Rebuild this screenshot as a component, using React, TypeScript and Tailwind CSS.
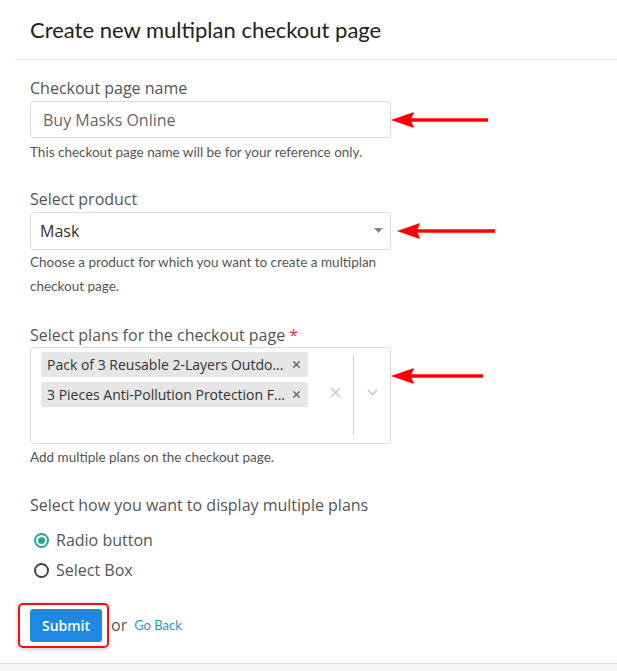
import { ChevronDown, X } from 'lucide-react';

function Arrow({ width }: { width: number }) {
  return (
    <svg width={width} height="20" viewBox={`0 0 ${width} 20`} className="shrink-0">
      <polygon points={`0,10 23,2 20,10 23,18`} fill="#ff0000" />
      <line x1="18" y1="10" x2={width} y2="10" stroke="#ff0000" strokeWidth="3.5" />
    </svg>
  );
}

export default function App() {
  const font = { fontFamily: '"Open Sans", "Liberation Sans", sans-serif' };
  const lato = { fontFamily: 'Lato, sans-serif' };
  return (
    <div className="w-[617px] h-[671px] bg-white flex flex-col" style={font}>
      <div className="h-[60px] ml-[15px] border-b border-[#e3e3e3] flex items-center pl-[15px]">
        <h1 className="text-[22px] text-[#222]" style={lato}>
          Create new multiplan checkout page
        </h1>
      </div>

      <div className="flex-1 pl-[30px] pt-[17px]">
        {/* page name */}
        <p className="text-[16px] text-[#555] leading-[22px]">Checkout page name</p>
        <div className="flex items-center mt-[2px]">
          <div className="w-[361px] h-[37px] border border-[#dcdcdc] rounded-[4px] flex items-center pl-[12px] text-[16px] text-[#666]">
            Buy Masks Online
          </div>
          <Arrow width={97} />
        </div>
        <p className="text-[13.5px] text-[#555] mt-[5px] leading-[18px]" style={lato}>
          This checkout page name will be for your reference only.
        </p>

        {/* product */}
        <p className="text-[16px] text-[#555] leading-[22px] mt-[27px]">Select product</p>
        <div className="flex items-center mt-[2px]">
          <div className="w-[361px] h-[38px] border border-[#dcdcdc] rounded-[4px] flex items-center justify-between pl-[9px] pr-[7px] text-[16px] text-[#333]">
            <span>Mask</span>
            <svg width="9" height="6" viewBox="0 0 9 6"><polygon points="0,0 9,0 4.5,5" fill="#888" /></svg>
          </div>
          <div className="ml-[6px]"><Arrow width={98} /></div>
        </div>
        <p className="text-[13.5px] text-[#555] leading-[24px] mt-[0px] w-[360px]" style={lato}>
          Choose a product for which you want to create a multiplan checkout page.
        </p>

        {/* plans */}
        <p className="text-[16px] text-[#555] leading-[22px] mt-[26px]">
          Select plans for the checkout page <span className="text-[#dc3545]">*</span>
        </p>
        <div className="flex items-center mt-[1px]">
          <div className="w-[361px] h-[97px] border border-[#dcdcdc] rounded-[4px] flex pl-[10px] pt-[4px] pb-[6px]">
            <div className="flex flex-col gap-[5px] w-[267px]">
              {['Pack of 3 Reusable 2-Layers Outdo...', '3 Pieces Anti-Pollution Protection F...'].map((t) => (
                <div key={t} className="h-[25px] bg-[#e6e6e6] rounded-[2px] flex items-center justify-between pl-[6px] pr-[6px] text-[14px] text-[#333]">
                  <span>{t}</span>
                  <X size={11} strokeWidth={3} className="text-[#666]" />
                </div>
              ))}
            </div>
            <div className="flex-1 flex items-center justify-end">
              <div className="w-[28px] flex justify-center mb-[5px]">
                <X size={17} strokeWidth={2} className="text-[#c8c8c8]" />
              </div>
              <div className="w-px h-[80px] bg-[#cfcfcf] ml-[4px]" />
              <div className="w-[36px] flex justify-center mb-[5px]">
                <ChevronDown size={17} strokeWidth={2} className="text-[#c8c8c8]" />
              </div>
            </div>
          </div>
          <div className="-mt-[40px]"><Arrow width={92} /></div>
        </div>
        <p className="text-[13.5px] text-[#555] leading-[18px] mt-[4px]" style={lato}>
          Add multiple plans on the checkout page.
        </p>

        {/* display */}
        <p className="text-[16px] text-[#555] leading-[22px] mt-[28px]">Select how you want to display multiple plans</p>
        <div className="flex flex-col gap-[8px] mt-[13px] pl-[4px]">
          <label className="flex items-center gap-[7px] text-[16px] text-[#555] h-[22px]">
            <span className="w-[15px] h-[15px] rounded-full border-2 border-[#26a69a] flex items-center justify-center">
              <span className="w-[7px] h-[7px] rounded-full bg-[#26a69a]" />
            </span>
            Radio button
          </label>
          <label className="flex items-center gap-[7px] text-[16px] text-[#555] h-[22px]">
            <span className="w-[15px] h-[15px] rounded-full border-2 border-[#444]" />
            Select Box
          </label>
        </div>

        {/* submit */}
        <div className="flex items-center mt-[22px] -ml-[12px]">
          <div className="border-2 border-[#ee1111] rounded-[5px] p-[4px] pl-[10px] pr-[5px] shadow-[0_1px_4px_rgba(0,0,0,0.25)]">
            <button className="w-[72px] h-[33px] bg-[#1e88e5] rounded-[3px] text-white text-[14px] font-semibold">
              Submit
            </button>
          </div>
          <span className="text-[16px] text-[#555] ml-[2px] -mt-[2px]">or</span>
          <a className="text-[13px] text-[#17a2b8] ml-[7px]" style={lato}>Go Back</a>
        </div>
      </div>

      <div className="h-[8px] border-t border-[#dddddd] bg-[#f7f7f7]" />
    </div>
  );
}
